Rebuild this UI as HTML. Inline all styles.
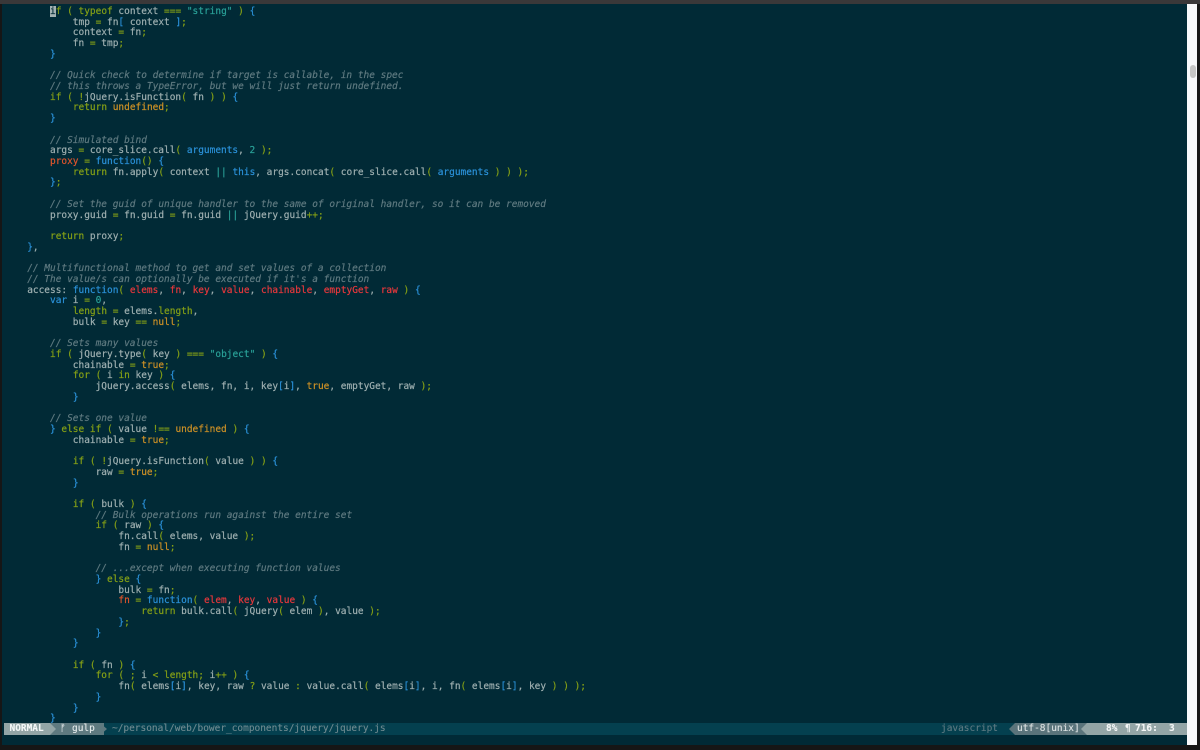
<!DOCTYPE html>
<html><head><meta charset="utf-8"><style>
html,body{margin:0;padding:0;width:1200px;height:750px;overflow:hidden;background:#161616}
#top{position:absolute;left:0;top:0;width:1200px;height:4px;background:#3a3839}
#term{position:absolute;left:2px;top:4px;width:1185px;height:741px;background:#012a36}
#code{position:absolute;left:4.4px;top:6.9px;margin:0;font:9.48px/10.72px "DejaVu Sans Mono","Liberation Mono",monospace;color:#9fb0b1;-webkit-text-stroke:.18px currentColor;filter:blur(.3px);white-space:pre}
i{color:#5f7a80;font-style:italic}
.g{color:#85a016}.b{color:#2b92da}.c{color:#2aa198}.r{color:#e8383c}.y{color:#cf9226}.o{color:#e2562c}
.cur{background:#a3b1b1;color:#012a36}
#sb{position:absolute;left:1187px;top:4px;width:10px;height:741px;background:#f7f8fa}
#th{position:absolute;left:1190px;top:65px;width:6px;height:13px;border-radius:3px;background:#c6c6c6}
#st{position:absolute;left:4px;top:723px;width:1183px;height:12px;background:#04404f;font:9.48px/12px "DejaVu Sans Mono",monospace;-webkit-text-stroke:.12px currentColor;filter:blur(.25px)}
#st div{position:absolute;top:0;height:12px;white-space:pre}
</style></head><body>
<div id="top"></div>
<div id="term"></div>
<pre id="code">        <span class="cur">i</span><span class="g">f</span> <span class="g">(</span> <span class="g">typeof</span> context <span class="g">===</span> <span class="c">"string"</span> <span class="g">)</span> <span class="b">{</span>
            tmp <span class="g">=</span> fn<span class="b">[</span> context <span class="b">]</span><span class="g">;</span>
            context <span class="g">=</span> fn<span class="g">;</span>
            fn <span class="g">=</span> tmp<span class="g">;</span>
        <span class="b">}</span>

        <i>// Quick check to determine if target is callable, in the spec</i>
        <i>// this throws a TypeError, but we will just return undefined.</i>
        <span class="g">if</span> <span class="g">(</span> <span class="g">!</span>jQuery.isFunction<span class="g">(</span> fn <span class="g">)</span> <span class="g">)</span> <span class="b">{</span>
            <span class="g">return</span> <span class="y">undefined</span><span class="g">;</span>
        <span class="b">}</span>

        <i>// Simulated bind</i>
        args <span class="g">=</span> core_slice.call<span class="g">(</span> <span class="b">arguments</span>, <span class="c">2</span> <span class="g">);</span>
        <span class="o">proxy</span> <span class="g">=</span> <span class="b">function</span><span class="g">()</span> <span class="b">{</span>
            <span class="g">return</span> fn.apply<span class="g">(</span> context <span class="c">||</span> <span class="b">this</span>, args.concat<span class="g">(</span> core_slice.call<span class="g">(</span> <span class="b">arguments</span> <span class="g">)</span> <span class="g">)</span> <span class="g">);</span>
        <span class="b">}</span><span class="g">;</span>

        <i>// Set the guid of unique handler to the same of original handler, so it can be removed</i>
        proxy.guid <span class="g">=</span> fn.guid <span class="g">=</span> fn.guid <span class="c">||</span> jQuery.guid<span class="g">++;</span>

        <span class="g">return</span> proxy<span class="g">;</span>
    <span class="b">}</span>,

    <i>// Multifunctional method to get and set values of a collection</i>
    <i>// The value/s can optionally be executed if it's a function</i>
    access: <span class="b">function</span><span class="g">(</span> <span class="r">elems</span>, <span class="r">fn</span>, <span class="r">key</span>, <span class="r">value</span>, <span class="r">chainable</span>, <span class="r">emptyGet</span>, <span class="r">raw</span> <span class="g">)</span> <span class="b">{</span>
        <span class="b">var</span> i <span class="g">=</span> <span class="c">0</span>,
            <span class="g">length</span> <span class="g">=</span> elems.<span class="g">length</span>,
            bulk <span class="g">=</span> key <span class="g">==</span> <span class="y">null</span><span class="g">;</span>

        <i>// Sets many values</i>
        <span class="g">if</span> <span class="g">(</span> jQuery.type<span class="g">(</span> key <span class="g">)</span> <span class="g">===</span> <span class="c">"object"</span> <span class="g">)</span> <span class="b">{</span>
            chainable <span class="g">=</span> <span class="y">true</span><span class="g">;</span>
            <span class="g">for</span> <span class="g">(</span> i <span class="g">in</span> key <span class="g">)</span> <span class="b">{</span>
                jQuery.access<span class="g">(</span> elems, fn, i, key<span class="b">[</span>i<span class="b">]</span>, <span class="y">true</span>, emptyGet, raw <span class="g">);</span>
            <span class="b">}</span>

        <i>// Sets one value</i>
        <span class="b">}</span> <span class="g">else if</span> <span class="g">(</span> value <span class="g">!==</span> <span class="y">undefined</span> <span class="g">)</span> <span class="b">{</span>
            chainable <span class="g">=</span> <span class="y">true</span><span class="g">;</span>

            <span class="g">if</span> <span class="g">(</span> <span class="g">!</span>jQuery.isFunction<span class="g">(</span> value <span class="g">)</span> <span class="g">)</span> <span class="b">{</span>
                raw <span class="g">=</span> <span class="y">true</span><span class="g">;</span>
            <span class="b">}</span>

            <span class="g">if</span> <span class="g">(</span> bulk <span class="g">)</span> <span class="b">{</span>
                <i>// Bulk operations run against the entire set</i>
                <span class="g">if</span> <span class="g">(</span> raw <span class="g">)</span> <span class="b">{</span>
                    fn.call<span class="g">(</span> elems, value <span class="g">);</span>
                    fn <span class="g">=</span> <span class="y">null</span><span class="g">;</span>

                <i>// ...except when executing function values</i>
                <span class="b">}</span> <span class="g">else</span> <span class="b">{</span>
                    bulk <span class="g">=</span> fn<span class="g">;</span>
                    <span class="o">fn</span> <span class="g">=</span> <span class="b">function</span><span class="g">(</span> <span class="r">elem</span>, <span class="r">key</span>, <span class="r">value</span> <span class="g">)</span> <span class="b">{</span>
                        <span class="g">return</span> bulk.call<span class="g">(</span> jQuery<span class="g">(</span> elem <span class="g">)</span>, value <span class="g">);</span>
                    <span class="b">}</span><span class="g">;</span>
                <span class="b">}</span>
            <span class="b">}</span>

            <span class="g">if</span> <span class="g">(</span> fn <span class="g">)</span> <span class="b">{</span>
                <span class="g">for</span> <span class="g">(</span> <span class="g">;</span> i <span class="g">&lt;</span> <span class="g">length</span><span class="g">;</span> i<span class="g">++</span> <span class="g">)</span> <span class="b">{</span>
                    fn<span class="g">(</span> elems<span class="b">[</span>i<span class="b">]</span>, key, raw <span class="g">?</span> value <span class="g">:</span> value.call<span class="g">(</span> elems<span class="b">[</span>i<span class="b">]</span>, i, fn<span class="g">(</span> elems<span class="b">[</span>i<span class="b">]</span>, key <span class="g">)</span> <span class="g">)</span> <span class="g">);</span>
                <span class="b">}</span>
            <span class="b">}</span>
        <span class="b">}</span></pre>
<div id="st">
<div style="left:46px;width:54px;background:#5f7a80"></div>
<div style="left:96px;width:7px;background:#5f7a80;clip-path:polygon(0 0,0 100%,100% 50%);left:96px"></div>
<div style="left:0;width:52px;background:#93a5a6;clip-path:polygon(0 0,46px 0,100% 50%,46px 100%,0 100%)"></div>
<div style="left:5.5px;color:#f4f7f7;font-weight:bold">NORMAL</div>
<div style="left:56px;color:#e6ecec">ᚠ</div>
<div style="left:68px;color:#e6ecec">gulp</div>
<div style="left:108px;color:#6f8a90">~/personal/web/bower_components/jquery/jquery.js</div>
<div style="left:937px;color:#5d7a82">javascript</div>
<div style="left:1005px;width:78px;background:#5a747b;clip-path:polygon(0 50%,6px 0,100% 0,100% 100%,6px 100%)"></div>
<div style="left:1013px;color:#dde3e3">utf-8[unix]</div>
<div style="left:1077px;width:106px;background:#93a5a6;clip-path:polygon(0 50%,6px 0,100% 0,100% 100%,6px 100%)"></div>
<div style="left:1102px;color:#f4f7f7;font-weight:bold">8%</div>
<div style="left:1121px;color:#f4f7f7">¶</div>
<div style="left:1131px;color:#f4f7f7;font-weight:bold">716:</div>
<div style="left:1165px;color:#f4f7f7;font-weight:bold">3</div>
</div>
<div id="sb"></div><div id="th"></div>
</body></html>
